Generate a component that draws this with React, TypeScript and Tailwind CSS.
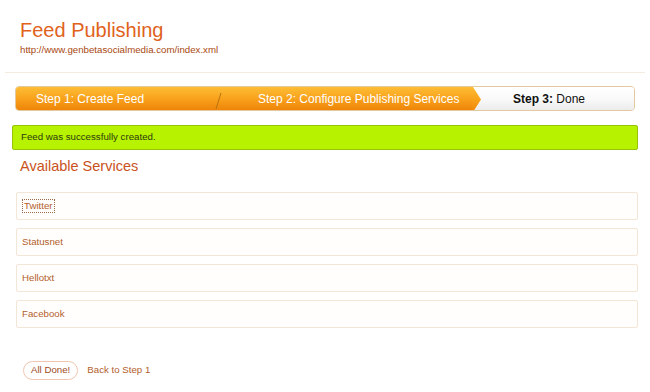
import { ReactNode } from "react";

const services = ["Twitter", "Statusnet", "Hellotxt", "Facebook"];

// ── Orange gradient used by the step bar ──
const orangeBg = "bg-gradient-to-b from-[#fdbd34] via-[#f9a21b] to-[#ee8508]";

const ServiceRow = ({ children }: { children: ReactNode }) => (
  <div className="h-[28px] flex items-center px-[5px] border border-[#f2e7d6] rounded-[2px] bg-[#fffefc]">
    {children}
  </div>
);

const App = () => {
  return (
    <div className="w-[650px] h-[392px] bg-white font-['Liberation_Sans',Arial,sans-serif] overflow-hidden">
      {/* ── Header ── */}
      <div className="pt-[18px] pl-[20px] h-[72px]">
        <h1 className="text-[20px] leading-[25px] text-[#e0621c]">Feed Publishing</h1>
        <p className="text-[9.7px] leading-[12px] text-[#a8480f] mt-[1px]">
          http://www.genbetasocialmedia.com/index.xml
        </p>
      </div>
      <div className="mx-[5px] h-px bg-[#f4ece0]" />

      {/* ── Step bar ── */}
      <div className="mt-[13px] mx-[15px] h-[25px] flex rounded-[4px] border border-[#e3c9a0] overflow-hidden">
        <div className={`w-[207px] flex items-center pl-[20px] text-white text-[12px] ${orangeBg} relative`}>
          Step 1: Create Feed
          <svg className="absolute right-0 top-0" width="10" height="25" viewBox="0 0 10 25">
            <line x1="8" y1="6" x2="3" y2="22" stroke="#b8720f" strokeWidth="1" />
          </svg>
        </div>
        <div className={`w-[249px] flex items-center pl-[35px] text-white text-[12px] ${orangeBg}`}>
          Step 2: Configure Publishing Services
        </div>
        <div className="flex-1 flex items-center bg-gradient-to-b from-white via-[#fafafa] to-[#ececec] relative">
          <svg className="absolute left-0 top-0" width="12" height="25" viewBox="0 0 12 25">
            <defs>
              <linearGradient id="og" x1="0" y1="0" x2="0" y2="1">
                <stop offset="0" stopColor="#fdbd34" />
                <stop offset="0.5" stopColor="#f9a21b" />
                <stop offset="1" stopColor="#ee8508" />
              </linearGradient>
            </defs>
            <polygon points="0,0 1,0 9,12.5 1,25 0,25" fill="url(#og)" />
          </svg>
          <span className="pl-[41px] text-[12px] text-[#111]">
            <b>Step 3:</b> Done
          </span>
        </div>
      </div>

      {/* ── Success message ── */}
      <div className="mt-[14px] mx-[12px] h-[25px] flex items-center pl-[8px] bg-[#b7f200] border border-[#97c30a] rounded-[2px] text-[9.7px] text-[#2d3a10]">
        Feed was successfully created.
      </div>

      <h2 className="mt-[7px] ml-[20px] text-[14.5px] leading-[18px] text-[#c9521c]">Available Services</h2>

      {/* ── Services ── */}
      <div className="mt-[17px] ml-[16px] mr-[12px] flex flex-col gap-[8px] text-[9.7px] text-[#b3602c]">
        {services.map((s, i) => (
          <ServiceRow key={s}>
            <span className={i === 0 ? "border border-dotted border-[#9a6a4a] px-px leading-[12px]" : ""}>{s}</span>
          </ServiceRow>
        ))}
      </div>

      {/* ── Footer actions ── */}
      <div className="mt-[33px] ml-[23px] flex items-center gap-[9px] text-[9.7px]">
        <button className="h-[19px] px-[7px] rounded-full border border-[#f1c6b0] text-[#9c4a22]">
          All Done!
        </button>
        <span className="text-[#b3602c]">Back to Step 1</span>
      </div>
    </div>
  );
};

export default App;
